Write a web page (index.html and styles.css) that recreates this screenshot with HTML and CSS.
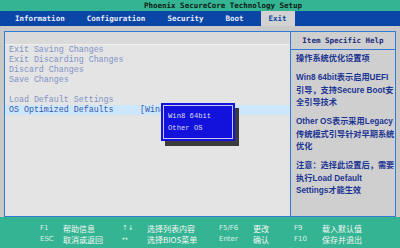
FILE: index.html
```html
<!DOCTYPE html>
<html lang="en">
<head>
    <meta charset="UTF-8">
    <title>Phoenix SecureCore Technology Setup</title>
    <link rel="stylesheet" href="styles.css">
</head>
<body>
    <div class="title">Phoenix SecureCore Technology Setup</div>

    <div class="menu">
        <span class="tab">Information</span>
        <span class="tab">Configuration</span>
        <span class="tab">Security</span>
        <span class="tab">Boot</span>
        <span class="tab current">Exit</span>
    </div>

    <div class="main">
        <div class="frame">
            <div class="left">
                <div class="left-head"></div>
                <div class="items">
                    <div class="item">Exit Saving Changes</div>
                    <div class="item">Exit Discarding Changes</div>
                    <div class="item">Discard Changes</div>
                    <div class="item">Save Changes</div>
                    <div class="item"></div>
                    <div class="item">Load Default Settings</div>
                    <div class="item selected">
                        <span class="label">OS Optimized Defaults</span>
                        <span class="value">[Win8 64bit]</span>
                    </div>
                </div>

                <!-- option popup for the selected item -->
                <div class="popup">
                    <div>Win8 64bit</div>
                    <div>Other OS</div>
                </div>
            </div>

            <div class="help">
                <div class="help-head">Item Specific Help</div>
                <div class="help-body">
                    <p>操作系统优化设置项</p>
                    <p>Win8 64bit表示启用UEFI<br>引导，支持Secure Boot安<br>全引导技术</p>
                    <p>Other OS表示采用Legacy<br>传统模式引导针对早期系统<br>优化</p>
                    <p>注意：选择此设置后，需要<br>执行Load Default<br>Settings才能生效</p>
                </div>
            </div>
        </div>
    </div>

    <div class="footer">
        <span class="key">F1</span><span>帮助信息</span>
        <span class="key">↑↓</span><span>选择列表内容</span>
        <span class="key">F5/F6</span><span>更改</span>
        <span class="key">F9</span><span>载入默认值</span>

        <span class="key">ESC</span><span>取消或返回</span>
        <span class="key">↔</span><span>选择BIOS菜单</span>
        <span class="key">Enter</span><span>确认</span>
        <span class="key">F10</span><span>保存并退出</span>
    </div>
</body>
</html>
```

FILE: styles.css
```css
/* Common styles */
body {
    margin: 0;
    width: 400px;
    height: 248px;
    overflow: hidden;
    display: flex;
    flex-direction: column;
    background-color: #c9c9c9;
    font-family: 'DejaVu Sans Mono', monospace;
}

/* Title and menu bars */
.title {
    height: 11px;
    line-height: 11px;
    padding-left: 144px;
    background-color: #35b493;
    color: #0c1a14;
    font-size: 7.5px;
    font-weight: bold;
    white-space: nowrap;
}

.menu {
    height: 15px;
    display: flex;
    align-items: stretch;
    padding-left: 4px;
    background-color: #0a46a6;
}

.tab {
    padding: 0 11px;
    line-height: 15px;
    color: #e8eef8;
    font-size: 7.5px;
    font-weight: bold;
}

.tab.current {
    margin-left: 6px;
    padding: 0 8px;
    background-color: #d2d2d2;
    color: #0a46a6;
}

/* Main panel */
.main {
    height: 191px;
    padding: 5px 4px 0 4px;
    box-sizing: border-box;
}

.frame {
    height: 186px;
    display: flex;
    border: 1px solid #3479d6;
    box-sizing: border-box;
}

.left {
    flex: 1;
    position: relative;
    background-color: #e4e4e4;
}

.left-head {
    height: 12px;
    background-color: #dadada;
    border-bottom: 1px solid #eeeeee;
}

.items {
    font-family: 'Liberation Mono', monospace;
    font-size: 8.3px;
    color: #8193c6;
}

.item {
    height: 10px;
    line-height: 10px;
    padding-left: 4px;
    display: flex;
    white-space: nowrap;
}

.item.selected {
    background-color: #cce7fb;
    color: #3a58ac;
}

.item .label {
    width: 131px;
}

.popup {
    position: absolute;
    left: 156px;
    top: 71px;
    width: 64px;
    padding: 8px 3px 7px 7px;
    background-color: #1212dc;
    outline: 1px solid #c8c8ee;
    outline-offset: -3px;
    box-shadow: 4px 5px 0 #3c3c3c;
    font-family: 'Liberation Mono', monospace;
    font-size: 7.2px;
    line-height: 11.5px;
    color: #dcdcf4;
}

/* Help column */
.help {
    width: 104px;
    border-left: 1px solid #3479d6;
    background-color: #cfcfcf;
}

.help-head {
    height: 17px;
    line-height: 18px;
    text-align: center;
    border-bottom: 1px solid #3479d6;
    color: #1b2b7c;
    font-size: 7.5px;
    font-weight: bold;
}

.help-body {
    padding: 3px 0 0 5px;
    font-family: 'Liberation Sans', 'Noto Sans CJK SC', sans-serif;
    font-size: 8.2px;
    font-weight: bold;
    line-height: 12.5px;
    color: #1c3593;
    white-space: nowrap;
}

.help-body p {
    margin: 0 0 6.5px 0;
}

/* Key legend */
.footer {
    flex: 1;
    display: grid;
    grid-template-columns: 23px 59px 25px 72px 34px 41px 28px auto;
    grid-auto-rows: 11px;
    align-content: center;
    padding-left: 40px;
    padding-top: 2px;
    background-color: #35b493;
    color: #f2f7f4;
    font-family: 'Noto Sans CJK SC', sans-serif;
    font-size: 8px;
    line-height: 11px;
    white-space: nowrap;
}

.footer .key {
    font-family: 'DejaVu Sans', sans-serif;
    font-size: 7px;
    color: #dcefe6;
}
```
